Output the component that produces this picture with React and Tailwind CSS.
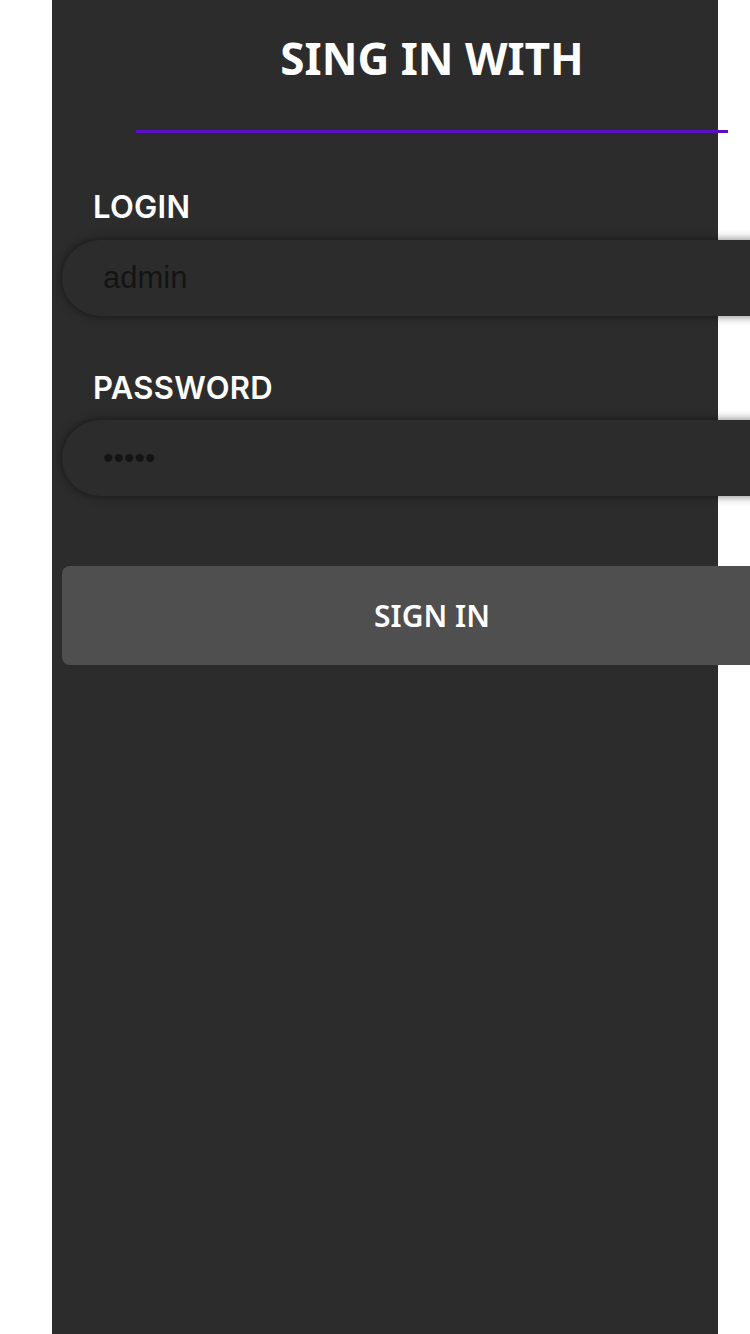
export default function App() {
  return (
    <div className="w-full min-h-[1334px] bg-white overflow-hidden">
      {/* Panel */}
      <div className="ml-[52px] w-[666px] min-h-[1334px] bg-[#2c2c2c] pl-[10px] font-['Noto_Sans',sans-serif]">
        <div className="w-[740px] flex flex-col">
          {/* Encabezado */}
          <h1 className="pt-[32px] text-center text-[44px] leading-[52px] font-bold text-white">
            SING IN WITH
          </h1>
          <div className="mt-[46px] mx-auto w-[592px] h-[3px] bg-[#5b0ec8]" />

          {/* Login */}
          <label className="mt-[56px] pl-[31px] text-[31px] leading-[36px] font-semibold tracking-[0.3px] text-white font-['Inter',sans-serif]">
            LOGIN
          </label>
          <input
            type="text"
            defaultValue="admin"
            className="mt-[15px] h-[76px] w-full rounded-full bg-[#2c2c2c] pl-[41px] text-[31px] text-[#141414] font-['Liberation_Sans',sans-serif] outline-none shadow-[0_0_10px_rgba(0,0,0,0.55)]"
          />

          {/* Password */}
          <label className="mt-[54px] pl-[31px] text-[31px] leading-[36px] font-semibold tracking-[0.3px] text-white font-['Inter',sans-serif]">
            PASSWORD
          </label>
          <input
            type="password"
            defaultValue="admin"
            className="mt-[14px] h-[76px] w-full rounded-full bg-[#2c2c2c] pl-[41px] text-[30px] text-[#141414] font-['Liberation_Sans',sans-serif] outline-none shadow-[0_0_10px_rgba(0,0,0,0.55)]"
          />

          {/* Boton */}
          <button className="mt-[70px] h-[99px] w-full rounded-[8px] bg-[#4f4f4f] text-[30px] font-semibold text-white">
            SIGN IN
          </button>
        </div>
      </div>
    </div>
  );
}
